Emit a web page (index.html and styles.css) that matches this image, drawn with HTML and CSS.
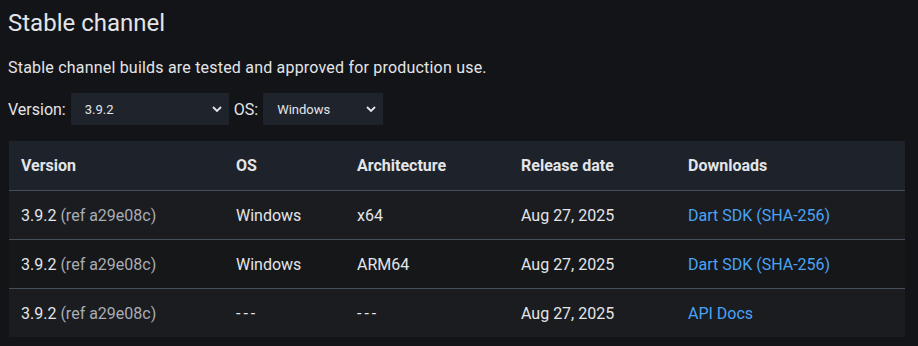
FILE: index.html
```html
<!DOCTYPE html>
<html lang="en">
<head>
  <meta charset="UTF-8" />
  <title>Stable channel</title>
  <link rel="stylesheet" href="styles.css">
</head>
<body>
  <h2 class="title">Stable channel</h2>
  <p class="intro">Stable channel builds are tested and approved for production use.</p>

  <!-- Filter -->
  <div class="filters">
    <label for="version">Version:</label>
    <select id="version" class="select select-version">
      <option>3.9.2</option>
    </select>
    <label for="os">OS:</label>
    <select id="os" class="select select-os">
      <option>Windows</option>
    </select>
  </div>

  <table class="builds">
    <thead>
      <tr>
        <th class="col-version">Version</th>
        <th class="col-os">OS</th>
        <th class="col-arch">Architecture</th>
        <th class="col-date">Release date</th>
        <th>Downloads</th>
      </tr>
    </thead>
    <tbody>
      <tr>
        <td>3.9.2 <span class="ref">(ref a29e08c)</span></td>
        <td>Windows</td>
        <td>x64</td>
        <td>Aug 27, 2025</td>
        <td><a href="">Dart SDK (SHA-256)</a></td>
      </tr>
      <tr class="alt">
        <td>3.9.2 <span class="ref">(ref a29e08c)</span></td>
        <td>Windows</td>
        <td>ARM64</td>
        <td>Aug 27, 2025</td>
        <td><a href="">Dart SDK (SHA-256)</a></td>
      </tr>
      <tr>
        <td>3.9.2 <span class="ref">(ref a29e08c)</span></td>
        <td><span class="dash">---</span></td>
        <td><span class="dash">---</span></td>
        <td>Aug 27, 2025</td>
        <td><a href="">API Docs</a></td>
      </tr>
    </tbody>
  </table>
</body>
</html>
```

FILE: styles.css
```css
html, body {
  margin: 0;
  background-color: #131417;
  color: #e3e5e8;
  font-family: 'Roboto', 'Liberation Sans', sans-serif;
}

body {
  padding: 8px 13px 0 8px;
}

.title {
  margin: 0;
  font-size: 24px;
  font-weight: 400;
  line-height: 30px;
}

.intro {
  margin: 19px 0 0;
  font-size: 16px;
  line-height: 22px;
  letter-spacing: 0.2px;
}

/* Filter */
.filters {
  display: flex;
  align-items: center;
  gap: 5px;
  margin-top: 14px;
  font-size: 16px;
}

.select {
  appearance: none;
  height: 32px;
  border: none;
  border-radius: 0;
  padding: 0 28px 0 14px;
  background-color: #1f232c;
  color: #e3e5e8;
  font-family: inherit;
  font-size: 13px;
  background-image: url("data:image/svg+xml,%3Csvg xmlns='http://www.w3.org/2000/svg' width='10' height='6' viewBox='0 0 10 6'%3E%3Cpath d='M1 1l4 4 4-4' fill='none' stroke='%23e3e5e8' stroke-width='1.8'/%3E%3C/svg%3E");
  background-repeat: no-repeat;
  background-position: right 7px center;
}

.select-version {
  width: 158px;
}

.select-os {
  width: 120px;
}

/* Tabelle */
.builds {
  width: 896px;
  margin: 16px 0 0 1px;
  border-collapse: collapse;
  font-size: 16px;
}

.builds th,
.builds td {
  text-align: left;
  padding: 0 12px;
  height: 48px;
  border-bottom: 1px solid #46505c;
}

.builds th {
  background-color: #1e222a;
  font-weight: 700;
  height: 49px;
}

.builds tbody tr {
  background-color: #1b1c20;
}

.builds tbody tr.alt {
  background-color: #161719;
}

.builds tbody tr:last-child td {
  border-bottom: none;
}

.col-version { width: 191px; }
.col-os { width: 97px; }
.col-arch { width: 140px; }
.col-date { width: 143px; }

.ref {
  color: #a9adb3;
}

.dash {
  letter-spacing: 3px;
}

.builds a {
  color: #4aa3f5;
  text-decoration: none;
}
```
